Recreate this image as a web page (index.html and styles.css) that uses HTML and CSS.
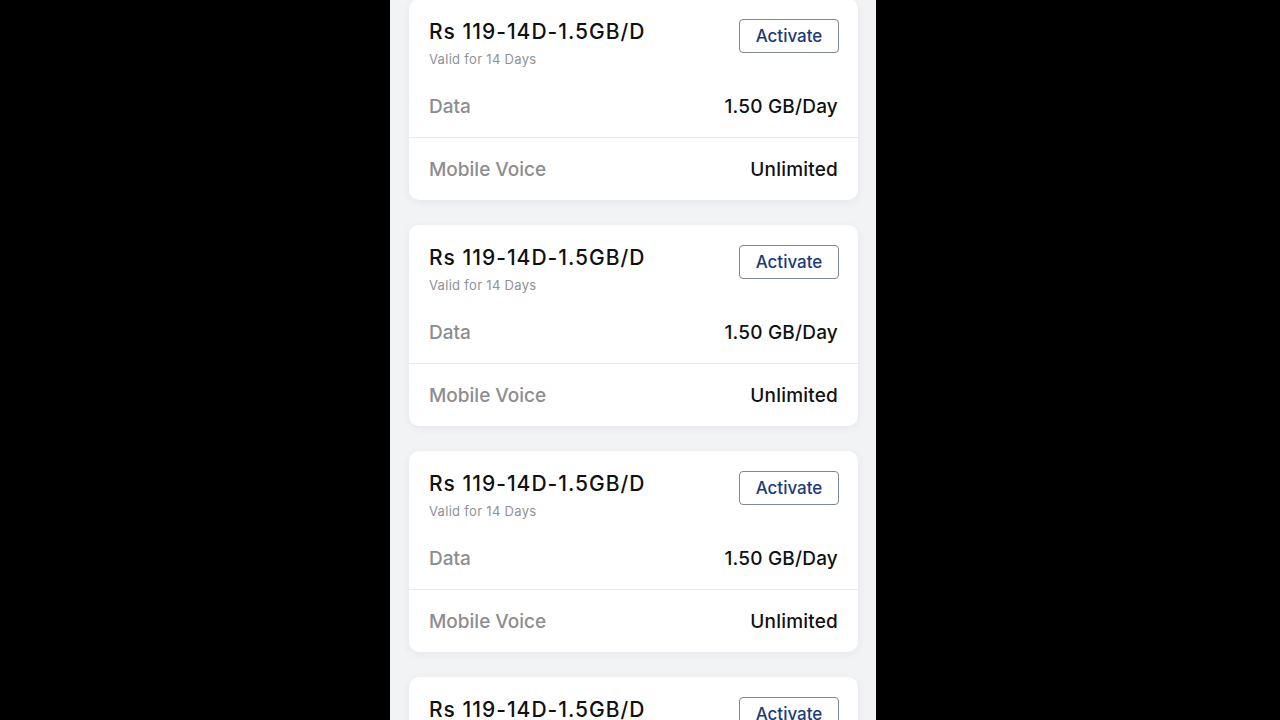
FILE: index.html
```html
<!DOCTYPE html>
<html>
<head>
<meta charset="utf-8">
<link rel="stylesheet" href="styles.css">
</head>
<body>
<div class="phone">
  <div class="plans">
    <div class="card">
      <div class="head">
        <div class="titles">
          <div class="title">Rs 119-14D-1.5GB/D</div>
          <div class="valid">Valid for 14 Days</div>
        </div>
        <button class="activate">Activate</button>
      </div>
      <div class="row"><span class="label">Data</span><span class="value">1.50 GB/Day</span></div>
      <div class="row"><span class="label">Mobile Voice</span><span class="value">Unlimited</span></div>
    </div>
    <div class="card">
      <div class="head">
        <div class="titles">
          <div class="title">Rs 119-14D-1.5GB/D</div>
          <div class="valid">Valid for 14 Days</div>
        </div>
        <button class="activate">Activate</button>
      </div>
      <div class="row"><span class="label">Data</span><span class="value">1.50 GB/Day</span></div>
      <div class="row"><span class="label">Mobile Voice</span><span class="value">Unlimited</span></div>
    </div>
    <div class="card">
      <div class="head">
        <div class="titles">
          <div class="title">Rs 119-14D-1.5GB/D</div>
          <div class="valid">Valid for 14 Days</div>
        </div>
        <button class="activate">Activate</button>
      </div>
      <div class="row"><span class="label">Data</span><span class="value">1.50 GB/Day</span></div>
      <div class="row"><span class="label">Mobile Voice</span><span class="value">Unlimited</span></div>
    </div>
    <div class="card">
      <div class="head">
        <div class="titles">
          <div class="title">Rs 119-14D-1.5GB/D</div>
          <div class="valid">Valid for 14 Days</div>
        </div>
        <button class="activate">Activate</button>
      </div>
      <div class="row"><span class="label">Data</span><span class="value">1.50 GB/Day</span></div>
      <div class="row"><span class="label">Mobile Voice</span><span class="value">Unlimited</span></div>
    </div>
  </div>
</div>
</body>
</html>
```

FILE: styles.css
```css
html, body {
  margin: 0;
  padding: 0;
  background: #000;
  height: 720px;
  overflow: hidden;
}

.phone {
  width: 486px;
  height: 720px;
  margin: 0 0 0 390px;
  box-sizing: border-box;
  padding: 0 18px 0 19px;
  background: #f2f3f5;
  overflow: hidden;
  font-family: Inter, "Liberation Sans", sans-serif;
}

.plans {
  display: flex;
  flex-direction: column;
  gap: 25px;
  margin-top: -1px;
}

.card {
  background: #fff;
  border-radius: 10px;
  box-shadow: 0 2px 8px rgba(20, 30, 50, 0.06);
  flex-shrink: 0;
}

.head {
  display: flex;
  justify-content: space-between;
  align-items: flex-start;
  padding: 20px 19px 8px 20px;
}

.titles {
  display: flex;
  flex-direction: column;
  gap: 7px;
  padding-top: 1px;
}

.title {
  font-size: 21px;
  line-height: 24px;
  color: #111;
  font-weight: 500;
  letter-spacing: 1px;
}

.valid {
  font-size: 13px;
  line-height: 16px;
  color: #8f9196;
  letter-spacing: 0.3px;
}

.activate {
  width: 100px;
  height: 34px;
  box-sizing: border-box;
  border: 1px solid #7f8790;
  border-radius: 4px;
  background: #fff;
  color: #1c3a78;
  font-family: Inter, "Liberation Sans", sans-serif;
  font-size: 17px;
  font-weight: 500;
  padding: 0;
}

.row {
  display: flex;
  justify-content: space-between;
  align-items: center;
  height: 62px;
  padding: 0 20px;
}

.row + .row {
  border-top: 1px solid #e9eaec;
}

.label {
  font-size: 19px;
  color: #8d8d8f;
  font-weight: 500;
  letter-spacing: 0;
}

.value {
  font-size: 19px;
  color: #111;
  font-weight: 500;
  letter-spacing: 0.2px;
}
```
